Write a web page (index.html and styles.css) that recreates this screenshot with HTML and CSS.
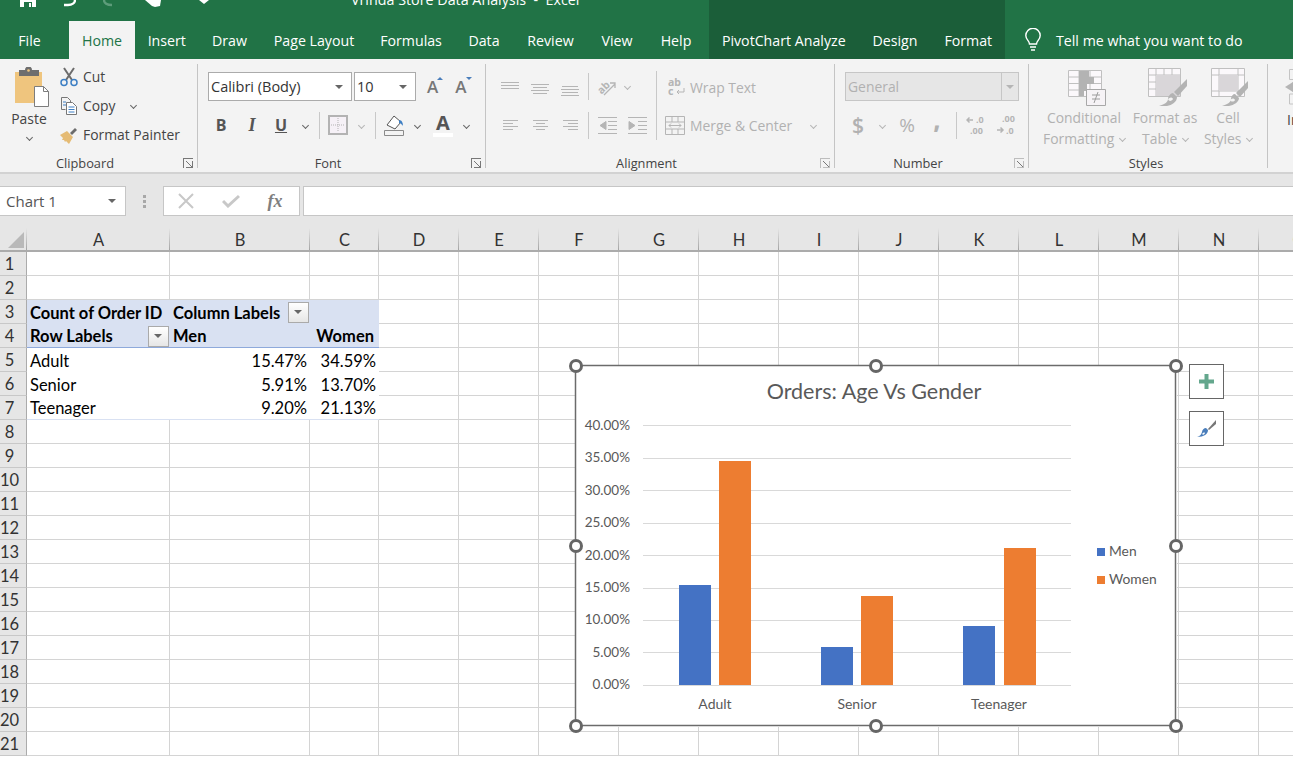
FILE: index.html
```html
<!DOCTYPE html>
<html>

<head>
	<meta charset="utf-8">
	<title>Vrinda Store Data Analysis - Excel</title>
	<link rel="stylesheet" href="styles.css">
</head>

<body>
	<header class="titlebar">
		<div class="title-main">
			<div class="qat">
				<svg class="qat-save" width="16" height="7" viewBox="0 0 16 7"><path d="M0 0h16v7H0z" fill="#fff"/><path d="M4 2h8v5H4z" fill="#217346"/><path d="M9 3h2v4H9z" fill="#fff"/></svg>
				<svg class="qat-undo" width="12" height="7" viewBox="0 0 12 7"><path d="M11 0c0 3-3 5-7 5H0" fill="none" stroke="#fff" stroke-width="2.4"/></svg>
				<svg class="qat-redo" width="12" height="7" viewBox="0 0 12 7"><path d="M1 0c0 3 3 5 8 5" fill="none" stroke="#5d9c7a" stroke-width="2.4"/></svg>
				<svg class="qat-touch" width="16" height="7" viewBox="0 0 16 7"><path d="M0 0l7 6 3 1 5-1 1-6z" fill="#fff"/></svg>
				<svg class="qat-more" width="10" height="4" viewBox="0 0 10 4"><path d="M0 0h10L5 4z" fill="#fff"/></svg>
			</div>
			<span class="doc-title">Vrinda Store Data Analysis &nbsp;-&nbsp; Excel</span>
		</div>
		<div class="title-ctx"><span>PivotChart Tools</span></div>
	</header>

	<nav class="tabs">
		<div class="tabs-main">
			<a class="tab tab-file">File</a>
			<a class="tab tab-home">Home</a>
			<a class="tab">Insert</a>
			<a class="tab">Draw</a>
			<a class="tab">Page Layout</a>
			<a class="tab">Formulas</a>
			<a class="tab">Data</a>
			<a class="tab">Review</a>
			<a class="tab">View</a>
			<a class="tab">Help</a>
		</div>
		<div class="tabs-ctx">
			<a class="tab">PivotChart Analyze</a>
			<a class="tab">Design</a>
			<a class="tab">Format</a>
		</div>
		<div class="tell-me">
			<svg width="18" height="24" viewBox="0 0 18 24" fill="none" stroke="#fff" stroke-width="1.4"><path d="M5.500 16c0-3-3.700-4.500-3.700-8.500a7.200 7.200 0 0 1 14.400 0c0 4-3.700 5.500-3.700 8.500z"/><path d="M6 19h6M7 22h4"/></svg>
			<span>Tell me what you want to do</span>
		</div>
	</nav>

	<section class="ribbon">
		<div class="group group-clipboard">
			<div class="group-body clip-body">
				<div class="paste">
					<svg width="36" height="40" viewBox="0 0 36 40">
						<path d="M1 5h27v31H1z" fill="#efc57e"/>
						<path d="M5 3h6a3.500 3.500 0 0 1 7 0h7v6H5z" fill="#6e6e6e"/>
						<circle cx="14.500" cy="3.500" r="1.300" fill="#efc57e"/>
						<path d="M20.500 19.500h9l5 5v15h-14z" fill="#fff" stroke="#7d7d7d"/>
						<path d="M29.500 19.500v5h5" fill="none" stroke="#7d7d7d"/>
					</svg>
					<span>Paste</span>
					<i class="chev"></i>
				</div>
				<div class="clip-tools">
					<div class="clip-tool">
						<svg width="18" height="20" viewBox="0 0 18 20" fill="none"><path d="M6 13L14 1M12 13L4 1" stroke="#6c6c6c" stroke-width="2"/><circle cx="4" cy="15.500" r="3" stroke="#3d7fc4" stroke-width="1.500"/><circle cx="14" cy="15.500" r="3" stroke="#3d7fc4" stroke-width="1.500"/></svg>
						<span>Cut</span>
					</div>
					<div class="clip-tool">
						<svg width="18" height="18" viewBox="0 0 18 18" fill="none"><path d="M1.500.5h6l3 3v3M1.500.5v12h4" stroke="#777"/><path d="M6.500 5.500h6l4 4v8h-10z" fill="#fff" stroke="#777"/><path d="M3 5h3M3 8h3M8.500 10h6M8.500 12.500h6M8.500 15h6" stroke="#3d7fc4"/></svg>
						<span>Copy</span>
						<i class="chev chev-copy"></i>
					</div>
					<div class="clip-tool">
						<svg width="18" height="18" viewBox="0 0 18 18"><path d="M10 7l5-5 2 2-5 5z" fill="#6c6c6c"/><path d="M0 9l7-4 6 6-4 7-3-3-1 1-1-2-2 0 1-2z" fill="#e5bb74"/></svg>
						<span>Format Painter</span>
					</div>
				</div>
			</div>
			<div class="group-foot"><span class="group-label">Clipboard</span><i class="launcher"></i></div>
		</div>

		<div class="group group-font">
			<div class="group-body">
				<div class="font-top">
					<div class="combo combo-font"><span>Calibri (Body)</span><i class="tri"></i></div>
					<div class="combo combo-size"><span>10</span><i class="tri"></i></div>
					<span class="size-btn size-grow">A<i class="tip-up"></i></span>
					<span class="size-btn size-shrink">A<i class="tip-down"></i></span>
				</div>
				<div class="font-bottom">
					<b class="fmt">B</b>
					<i class="fmt fmt-i">I</i>
					<span class="fmt fmt-u">U</span>
					<i class="chev"></i>
					<i class="sep"></i>
					<svg width="20" height="20" viewBox="0 0 20 20"><path d="M1 1h18v18H1z" fill="#f6f1f7" stroke="#b3b3b3" stroke-width="2"/><path d="M10 3v14M3 10h14" stroke="#b3b3b3" stroke-dasharray="1 1"/></svg>
					<i class="chev chev-off"></i>
					<i class="sep"></i>
					<svg width="21" height="21" viewBox="0 0 21 21"><path d="M10 1l7 6-6 7-8-4z" fill="#fff" stroke="#555"/><path d="M15 5c3 0 4 3 4 6-1-1-2-3-4-3z" fill="#3d7fc4"/><path d="M.5 15.500h19v5H.5z" fill="#f3f3f3" stroke="#8a8a8a"/></svg>
					<i class="chev"></i>
					<span class="font-color">A</span>
					<i class="chev"></i>
				</div>
			</div>
			<div class="group-foot"><span class="group-label">Font</span><i class="launcher"></i></div>
		</div>

		<div class="group group-align">
			<div class="group-body align-body">
				<div class="align-grid">
					<svg width="18" height="10" viewBox="0 0 18 10"><path d="M0 .5h18M0 3.500h18M0 6.500h18" stroke="#b5b5b5"/></svg>
					<svg class="align-mid" width="18" height="10" viewBox="0 0 18 10"><path d="M0 .5h18M2 3.500h14M0 6.500h18M2 9.500h14" stroke="#b5b5b5"/></svg>
					<svg class="align-low" width="18" height="10" viewBox="0 0 18 10"><path d="M1 .5h16M0 3.500h18M1 6.500h16M0 9.500h18" stroke="#b5b5b5"/></svg>
					<i class="sep"></i>
					<svg width="20" height="20" viewBox="0 0 20 20"><text class="svg-ab" x="1" y="15" transform="rotate(-45 6 12)">ab</text><path d="M7 18L18 7M13 6h5v5" fill="none" stroke="#b5b5b5" stroke-width="1.300"/></svg>
					<i class="chev chev-off chev-left"></i>
					<svg width="15" height="11" viewBox="0 0 15 11"><path d="M0 .5h15M0 3.500h10M0 6.500h15M0 9.500h10" stroke="#b5b5b5"/></svg>
					<svg width="15" height="11" viewBox="0 0 15 11"><path d="M0 .5h15M3 3.500h9M0 6.500h15M3 9.500h9" stroke="#b5b5b5"/></svg>
					<svg width="15" height="11" viewBox="0 0 15 11"><path d="M0 .5h15M5 3.500h10M0 6.500h15M5 9.500h10" stroke="#b5b5b5"/></svg>
					<i class="sep"></i>
					<svg width="19" height="17" viewBox="0 0 19 17" fill="none" stroke="#b5b5b5"><path d="M0 .5h19M0 16.500h19M10 4.500h9M10 8.500h9M10 12.500h9"/><path d="M8 4.500L2 8.500l6 4z" fill="#b5b5b5"/></svg>
					<svg width="19" height="17" viewBox="0 0 19 17" fill="none" stroke="#b5b5b5"><path d="M0 .5h19M0 16.500h19M10 4.500h9M10 8.500h9M10 12.500h9"/><path d="M1 4.500l6 4-6 4z" fill="#b5b5b5"/></svg>
				</div>
				<i class="sep sep-long"></i>
				<div class="align-wide">
					<div class="wide-tool wide-wrap">
						<svg width="18" height="20" viewBox="0 0 18 20"><text class="svg-wrap" x="0" y="9">ab</text><text class="svg-wrap" x="0" y="18">c</text><path d="M16 11v4H9M11 13l-2 2 2 2" fill="none" stroke="#b5b5b5"/></svg>
						<span>Wrap Text</span>
					</div>
					<div class="wide-tool wide-merge">
						<svg width="20" height="19" viewBox="0 0 20 19" fill="none" stroke="#b5b5b5"><path d="M.5.500h19v18H.5zM.5 6h19M.5 13h19M7 .5V6M13 .5V6M7 13v5.500M13 13v5.500"/><path d="M4 9.500h12M6 7.500l-2 2 2 2M14 7.500l2 2-2 2"/></svg>
						<span>Merge &amp; Center</span>
						<i class="chev chev-off chev-merge"></i>
					</div>
				</div>
			</div>
			<div class="group-foot"><span class="group-label">Alignment</span><i class="launcher launcher-off"></i></div>
		</div>

		<div class="group group-number">
			<div class="group-body">
				<div class="number-combo"><span>General</span><b><i class="tri tri-off"></i></b></div>
				<div class="number-row">
					<span class="num-sym num-dollar">$</span>
					<i class="chev chev-off"></i>
					<span class="num-sym">%</span>
					<span class="num-sym num-comma">,</span>
					<i class="sep"></i>
					<svg width="20" height="24" viewBox="0 0 20 24"><path d="M7 7H1M3.500 4.500L1 7l2.500 2.500" fill="none" stroke="#b5b5b5" stroke-width="1.500"/><text class="svg-dec" x="10" y="10">.0</text><text class="svg-dec" x="4" y="21">.00</text></svg>
					<svg width="20" height="24" viewBox="0 0 20 24"><text class="svg-dec" x="6" y="9">.00</text><path d="M1 17h6M4.500 14.500L7 17l-2.500 2.500" fill="none" stroke="#b5b5b5" stroke-width="1.500"/><text class="svg-dec" x="10" y="21">.0</text></svg>
				</div>
			</div>
			<div class="group-foot"><span class="group-label">Number</span><i class="launcher launcher-off"></i></div>
		</div>

		<div class="group group-styles">
			<div class="group-body styles-body">
				<div class="style-btn style-cond">
					<svg width="38" height="36" viewBox="0 0 38 36">
						<path d="M.5.500h33v26H.5z" fill="#fbf8fb" stroke="#c0c0c0"/>
						<path d="M11 .5v26M22 .5v26M.5 7h33M.5 13.500h33M.5 20h33" stroke="#c0c0c0"/>
						<path d="M11 1h10v6H11zM11 7h15v7H11zM11 14h8v7h-8zM11 21h5v5h-5z" fill="#b3b3b3"/>
						<path d="M18.500 19.500h19v16h-19z" fill="#f6f3f6" stroke="#a8a8a8"/>
						<path d="M24 25h8M24 29h8M30 22l-4 11" stroke="#9c9c9c"/>
					</svg>
					<span>Conditional</span>
					<span>Formatting <i class="chev chev-off"></i></span>
				</div>
				<div class="style-btn style-table">
					<svg width="40" height="38" viewBox="0 0 40 38">
						<path d="M.5.500h32v28H.5z" fill="#fbf8fb" stroke="#c0c0c0"/>
						<path d="M8 .5v28M16 .5v28M24 .5v28M.5 7h32M.5 14h32M.5 21h32" stroke="#c0c0c0"/>
						<path d="M8 7h24v21H8z" fill="#d9d6d9"/>
						<path d="M39 11v7L30 28l-4-4z" fill="#b3b3b3"/>
						<path d="M25 25l4 4c0 5-5 8-10 9h-8c6-2 9-4 9-7 0-3 3-6 5-6z" fill="#b3b3b3"/>
						<path d="M20 31c2-2 4-2 5 0-1 2-4 3-5 0z" fill="#f3f3f3"/>
					</svg>
					<span>Format as</span>
					<span>Table <i class="chev chev-off"></i></span>
				</div>
				<div class="style-btn style-cell">
					<svg width="38" height="38" viewBox="0 0 38 38">
						<path d="M.5.500h33v28H.5z" fill="#fbf8fb" stroke="#c0c0c0"/>
						<path d="M8 1v28M27 1v28M1 7h32M1 23h32" stroke="#c0c0c0"/>
						<path d="M8 7h19v16H8z" fill="#d9d6d9"/>
						<path d="M37 13v7l-8 9-4-4z" fill="#b3b3b3"/>
						<path d="M24 26l4 4c0 4-5 7-10 8h-7c6-2 9-4 9-7 0-3 2-5 4-5z" fill="#b3b3b3"/>
						<path d="M19 32c2-2 4-2 5 0-1 2-4 2-5 0z" fill="#f3f3f3"/>
					</svg>
					<span>Cell</span>
					<span>Styles <i class="chev chev-off"></i></span>
				</div>
			</div>
			<div class="group-foot"><span class="group-label">Styles</span></div>
		</div>

		<div class="group group-cells">
			<div class="group-body insert-btn">
				<svg width="26" height="36" viewBox="0 0 26 36" fill="none" stroke="#c4c4c4"><path d="M4.500.500h20v10h-20zM4.500 25h20v10h-20zM8 13h16v10H8z"/><path d="M8 13L0 18l8 5z" fill="#b5b5b5" stroke="none"/></svg>
				<span>Insert</span>
			</div>
		</div>
	</section>

	<section class="formula-strip">
		<div class="name-box"><span>Chart 1</span><i class="tri"></i></div>
		<div class="strip-grip"><i></i><i></i><i></i></div>
		<div class="fx-box">
			<svg width="16" height="16" viewBox="0 0 16 16"><path d="M1 1l14 14M15 1L1 15" stroke="#c8c8c8" stroke-width="2"/></svg>
			<svg width="18" height="14" viewBox="0 0 18 14"><path d="M1 7l5 5L17 2" fill="none" stroke="#c8c8c8" stroke-width="3"/></svg>
			<span class="fx">fx</span>
		</div>
		<div class="formula-input"></div>
	</section>

	<main class="sheet">
		<table class="grid">
			<colgroup>
				<col class="col-head"><col class="col-a"><col class="col-b"><col class="col-c">
				<col class="col-std"><col class="col-std"><col class="col-std"><col class="col-std"><col class="col-std"><col class="col-std"><col class="col-std"><col class="col-std"><col class="col-std"><col class="col-std"><col class="col-std"><col class="col-std">
			</colgroup>
			<thead>
				<tr><th class="corner"><i></i></th><th>A</th><th>B</th><th>C</th><th>D</th><th>E</th><th>F</th><th>G</th><th>H</th><th>I</th><th>J</th><th>K</th><th>L</th><th>M</th><th>N</th><th>O</th></tr>
			</thead>
			<tbody>
				<tr><th>1</th><td></td><td></td><td></td><td></td><td></td><td></td><td></td><td></td><td></td><td></td><td></td><td></td><td></td><td></td><td></td></tr>
				<tr><th>2</th><td></td><td></td><td></td><td></td><td></td><td></td><td></td><td></td><td></td><td></td><td></td><td></td><td></td><td></td><td></td></tr>
				<tr>
					<th>3</th>
					<td class="pv">Count of Order ID</td>
					<td class="pv"><div class="with-filter">Column Labels<i class="filter"></i></div></td>
					<td class="pv"></td>
					<td></td><td></td><td></td><td></td><td></td><td></td><td></td><td></td><td></td><td></td><td></td><td></td>
				</tr>
				<tr>
					<th>4</th>
					<td class="pv pv-head"><div class="with-filter">Row Labels<i class="filter"></i></div></td>
					<td class="pv pv-head">Men</td>
					<td class="pv pv-head pv-right">Women</td>
					<td></td><td></td><td></td><td></td><td></td><td></td><td></td><td></td><td></td><td></td><td></td><td></td>
				</tr>
				<tr><th>5</th><td class="row">Adult</td><td class="row num">15.47%</td><td class="row num">34.59%</td><td></td><td></td><td></td><td></td><td></td><td></td><td></td><td></td><td></td><td></td><td></td><td></td></tr>
				<tr><th>6</th><td class="row">Senior</td><td class="row num">5.91%</td><td class="row num">13.70%</td><td></td><td></td><td></td><td></td><td></td><td></td><td></td><td></td><td></td><td></td><td></td><td></td></tr>
				<tr><th>7</th><td class="row row-last">Teenager</td><td class="row row-last num">9.20%</td><td class="row row-last num">21.13%</td><td></td><td></td><td></td><td></td><td></td><td></td><td></td><td></td><td></td><td></td><td></td><td></td></tr>
				<tr><th>8</th><td></td><td></td><td></td><td></td><td></td><td></td><td></td><td></td><td></td><td></td><td></td><td></td><td></td><td></td><td></td></tr>
				<tr><th>9</th><td></td><td></td><td></td><td></td><td></td><td></td><td></td><td></td><td></td><td></td><td></td><td></td><td></td><td></td><td></td></tr>
				<tr><th>10</th><td></td><td></td><td></td><td></td><td></td><td></td><td></td><td></td><td></td><td></td><td></td><td></td><td></td><td></td><td></td></tr>
				<tr><th>11</th><td></td><td></td><td></td><td></td><td></td><td></td><td></td><td></td><td></td><td></td><td></td><td></td><td></td><td></td><td></td></tr>
				<tr><th>12</th><td></td><td></td><td></td><td></td><td></td><td></td><td></td><td></td><td></td><td></td><td></td><td></td><td></td><td></td><td></td></tr>
				<tr><th>13</th><td></td><td></td><td></td><td></td><td></td><td></td><td></td><td></td><td></td><td></td><td></td><td></td><td></td><td></td><td></td></tr>
				<tr><th>14</th><td></td><td></td><td></td><td></td><td></td><td></td><td></td><td></td><td></td><td></td><td></td><td></td><td></td><td></td><td></td></tr>
				<tr><th>15</th><td></td><td></td><td></td><td></td><td></td><td></td><td></td><td></td><td></td><td></td><td></td><td></td><td></td><td></td><td></td></tr>
				<tr><th>16</th><td></td><td></td><td></td><td></td><td></td><td></td><td></td><td></td><td></td><td></td><td></td><td></td><td></td><td></td><td></td></tr>
				<tr><th>17</th><td></td><td></td><td></td><td></td><td></td><td></td><td></td><td></td><td></td><td></td><td></td><td></td><td></td><td></td><td></td></tr>
				<tr><th>18</th><td></td><td></td><td></td><td></td><td></td><td></td><td></td><td></td><td></td><td></td><td></td><td></td><td></td><td></td><td></td></tr>
				<tr><th>19</th><td></td><td></td><td></td><td></td><td></td><td></td><td></td><td></td><td></td><td></td><td></td><td></td><td></td><td></td><td></td></tr>
				<tr><th>20</th><td></td><td></td><td></td><td></td><td></td><td></td><td></td><td></td><td></td><td></td><td></td><td></td><td></td><td></td><td></td></tr>
				<tr><th>21</th><td></td><td></td><td></td><td></td><td></td><td></td><td></td><td></td><td></td><td></td><td></td><td></td><td></td><td></td><td></td></tr>
			</tbody>
		</table>

		<!-- chart floats over the cells, svg uses page coordinates -->
		<svg class="chart" width="602" height="362" viewBox="575 365 602 362">
			<text class="chart-title" x="874" y="399">Orders: Age Vs Gender</text>

			<g class="chart-lines">
				<path d="M643 425.500h428M643 458.500h428M643 490.500h428M643 523.500h428M643 555.500h428M643 588.500h428M643 620.500h428M643 652.500h428M643 685.500h428"/>
			</g>

			<g class="axis-y">
				<text x="630" y="430">40.00%</text>
				<text x="630" y="462">35.00%</text>
				<text x="630" y="495">30.00%</text>
				<text x="630" y="527">25.00%</text>
				<text x="630" y="560">20.00%</text>
				<text x="630" y="592">15.00%</text>
				<text x="630" y="624">10.00%</text>
				<text x="630" y="657">5.00%</text>
				<text x="630" y="689">0.00%</text>
			</g>

			<rect class="bar-men" x="679" y="585" width="32" height="100"/>
			<rect class="bar-women" x="719" y="461" width="32" height="224"/>
			<rect class="bar-men" x="821" y="647" width="32" height="38"/>
			<rect class="bar-women" x="861" y="596" width="32" height="89"/>
			<rect class="bar-men" x="963" y="626" width="32" height="59"/>
			<rect class="bar-women" x="1004" y="548" width="32" height="137"/>

			<g class="axis-x">
				<text x="715" y="709">Adult</text>
				<text x="857" y="709">Senior</text>
				<text x="999" y="709">Teenager</text>
			</g>

			<rect class="bar-men" x="1097" y="548" width="8" height="8"/>
			<text class="legend" x="1109" y="556">Men</text>
			<rect class="bar-women" x="1097" y="576" width="8" height="8"/>
			<text class="legend" x="1109" y="584">Women</text>

			<rect class="chart-frame" x="575.500" y="365.500" width="600" height="360"/>

			<g class="handles">
				<circle cx="576" cy="366" r="5.500"/><circle cx="876" cy="366" r="5.500"/><circle cx="1176" cy="366" r="5.500"/>
				<circle cx="576" cy="546" r="5.500"/><circle cx="1176" cy="546" r="5.500"/>
				<circle cx="576" cy="726" r="5.500"/><circle cx="876" cy="726" r="5.500"/><circle cx="1176" cy="726" r="5.500"/>
			</g>
		</svg>

		<div class="chart-tools">
			<div class="chart-btn">
				<svg width="15" height="15" viewBox="0 0 15 15"><path d="M5.500 0h4v5.500H15v4H9.500V15h-4V9.500H0v-4h5.500z" fill="#64a78d"/></svg>
			</div>
			<div class="chart-btn">
				<svg width="19" height="18" viewBox="0 0 19 18"><path d="M19 0v4l-7 6-1-1z" fill="#777"/><path d="M9 8l2 2c0 4-4 7-11 7 3-1 4-2 5-5 0-2 2-4 4-4z" fill="#4a7ebb"/><path d="M5 14c1-1 2-2 3-1-1 2-2 2-3 1z" fill="#fff"/></svg>
			</div>
		</div>
	</main>
</body>

</html>
```

FILE: styles.css
```css
html,
body {
	margin: 0;
	height: 757px;
	overflow: hidden;
	background: #fff;
	font-family: 'Open Sans', 'Noto Sans', sans-serif;
	color: #444;
}

svg {
	display: block;
	flex: none;
}

i {
	font-style: normal;
}

/* title + tabs */

.titlebar {
	display: flex;
	height: 21px;
	overflow: hidden;
	background: #217346;
	color: #fff;
}

.title-main {
	display: flex;
	width: 709px;
	flex: none;
}

.qat {
	display: flex;
	align-items: flex-start;
	width: 351px;
	flex: none;
}

.qat-save {
	margin-left: 20px;
}

.qat-undo {
	margin-left: 28px;
}

.qat-redo {
	margin-left: 27px;
}

.qat-touch {
	margin-left: 30px;
}

.qat-more {
	margin-left: 38px;
}

.doc-title {
	margin-top: -8px;
	font-size: 14.300px;
	line-height: 16px;
	white-space: nowrap;
}

.title-ctx {
	width: 296px;
	flex: none;
	text-align: center;
	background: #1b5e39;
	color: #b9d3c4;
}

.title-ctx span {
	display: block;
	margin-top: -13px;
	font-size: 12px;
	line-height: 16px;
}

.tabs {
	display: flex;
	height: 38px;
	background: #217346;
	color: #fff;
	font-size: 14.200px;
}

.tabs-main {
	display: grid;
	grid-template-columns: 69px 66px 63.500px 62px 107px 87px 59px 74px 59px 59px;
	width: 709px;
	flex: none;
}

.tabs-ctx {
	display: grid;
	grid-template-columns: 149.500px 73px 73.500px;
	width: 296px;
	flex: none;
	background: #1b5e39;
}

.tab {
	display: flex;
	align-items: center;
	justify-content: center;
	white-space: nowrap;
}

.tab-file {
	padding-right: 10px;
}

.tab-home {
	background: #f3f3f3;
	color: #217346;
}

.tell-me {
	display: flex;
	align-items: center;
	gap: 14px;
	margin-left: 19px;
	white-space: nowrap;
}

/* ribbon */

.ribbon {
	display: flex;
	height: 115px;
	padding-top: 5px;
	box-sizing: border-box;
	overflow: hidden;
	background: #f3f3f3;
	border-bottom: 2px solid #d2d2d2;
	font-size: 13.900px;
}

.group {
	display: flex;
	flex-direction: column;
	flex: none;
	height: 104px;
	box-sizing: border-box;
	border-right: 1px solid #c4c4c4;
}

.group-clipboard {
	width: 198px;
}

.group-font {
	width: 288px;
}

.group-align {
	width: 349px;
}

.group-number {
	width: 194px;
}

.group-styles {
	width: 239px;
}

.group-cells {
	border-right: 0;
	width: 100px;
}

.group-body {
	flex: 1;
	min-height: 0;
}

.group-foot {
	display: flex;
	align-items: center;
	height: 18px;
	padding: 8px 4px 0 0;
	box-sizing: border-box;
	font-size: 12.800px;
	color: #444;
}

.group-label {
	flex: 1;
	text-align: center;
}

.launcher {
	position: relative;
	display: block;
	width: 9px;
	height: 9px;
	margin-left: 13px;
	border: solid #777;
	border-width: 1px 0 0 1px;
}

.launcher::after {
	content: '';
	position: absolute;
	left: 2px;
	top: 2px;
	width: 7px;
	height: 7px;
	box-sizing: border-box;
	border: solid #777;
	border-width: 0 1px 1px 0;
	background: linear-gradient(45deg, #f3f3f3 45%, #777 45%, #777 55%, #f3f3f3 55%);
}

.launcher-off,
.launcher-off::after {
	border-color: #bdbdbd;
}

.chev {
	display: block;
	width: 5px;
	height: 5px;
	box-sizing: border-box;
	border: solid #666;
	border-width: 0 1px 1px 0;
	transform: rotate(45deg);
}

.chev-off {
	border-color: #b5b5b5;
}

.tri {
	display: block;
	width: 0;
	height: 0;
	border: solid transparent;
	border-width: 4px 4px 0;
	border-top-color: #666;
}

.tri-off {
	border-top-color: #b5b5b5;
}

.sep {
	display: block;
	width: 1px;
	height: 27px;
	background: #c8c8c8;
}

/* clipboard */

.clip-body {
	display: flex;
}

.paste {
	display: flex;
	flex-direction: column;
	align-items: center;
	width: 58px;
	flex: none;
	padding-top: 3px;
	box-sizing: border-box;
}

.paste svg {
	margin-left: 6px;
}

.paste span {
	margin-top: 2px;
	line-height: 20px;
}

.paste .chev {
	margin-top: 6px;
}

.clip-tools {
	display: flex;
	flex-direction: column;
	margin: -2px 0 0 2px;
}

.clip-tool {
	display: flex;
	align-items: center;
	gap: 5px;
	height: 29px;
	flex: none;
	white-space: nowrap;
}

.chev-copy {
	margin-left: 10px;
}

/* font */

.font-top {
	display: flex;
	align-items: center;
	margin: 8px 0 0 10px;
	gap: 2px;
}

.combo {
	display: flex;
	align-items: center;
	justify-content: space-between;
	height: 29px;
	padding: 0 8px 0 2px;
	box-sizing: border-box;
	background: #fff;
	border: 1px solid #ababab;
	color: #333;
	font-size: 14.500px;
}

.combo-font {
	width: 144px;
}

.combo-size {
	width: 62px;
}

.size-btn {
	position: relative;
	font-size: 17px;
	font-weight: 600;
	color: #777;
}

.size-grow {
	margin-left: 9px;
}

.size-shrink {
	margin-left: 15px;
}

.tip-up,
.tip-down {
	position: absolute;
	top: 2px;
	right: -5px;
	width: 0;
	height: 0;
	border: solid transparent;
	border-width: 0 3px 3px;
	border-bottom-color: #4a7ebb;
}

.tip-down {
	border-width: 3px 3px 0;
	border-top-color: #4a7ebb;
}

.font-bottom {
	display: grid;
	grid-template-columns: 26px 36px 22px 26px 2px 35px 12px 16px 22px 24px 28px 18px;
	align-items: center;
	justify-items: center;
	height: 30px;
	margin: 9px 0 0 10px;
}

.fmt {
	font-size: 16px;
	font-weight: 700;
	color: #555;
}

.fmt-i {
	font-style: italic;
	font-family: 'Liberation Serif', serif;
	font-size: 18px;
}

.fmt-u {
	text-decoration: underline;
}

.font-color {
	font-size: 20px;
	font-weight: 700;
	line-height: 20px;
	color: #555;
	border-bottom: 4px solid #fff;
	padding: 0 3px;
}

/* alignment */

.align-body {
	display: flex;
	padding-left: 9px;
}

.align-grid {
	display: grid;
	grid-template-columns: 30px 30px 30px 6px 32px 28px;
	grid-template-rows: 29px 30px;
	row-gap: 9px;
	align-items: center;
	justify-items: center;
	margin-top: 8px;
	height: 68px;
	width: 156px;
	flex: none;
}

.align-grid .sep {
	grid-column: 4;
}

.align-mid {
	margin-top: 5px;
}

.align-low {
	margin-top: 9px;
}

.sep-long {
	height: 69px;
	margin: 7px 0 0 5px;
	flex: none;
}

.align-wide {
	display: flex;
	flex-direction: column;
	margin-top: 8px;
	color: #b1b1b1;
}

.wide-tool {
	display: flex;
	align-items: center;
	gap: 5px;
	height: 30px;
	white-space: nowrap;
}

.wide-wrap {
	gap: 4px;
	padding-left: 11px;
}

.wide-merge {
	margin-top: 8px;
	padding-left: 8px;
}

.chev-left {
	margin-right: 20px;
}

.chev-merge {
	margin-left: 14px;
}

.svg-ab,
.svg-wrap {
	font-size: 10.500px;
	font-weight: 700;
	fill: #b5b5b5;
	font-family: 'Noto Sans', sans-serif;
}

.svg-dec {
	font-size: 9px;
	font-weight: 700;
	fill: #b5b5b5;
}

/* number */

.number-combo {
	display: flex;
	align-items: center;
	justify-content: space-between;
	width: 174px;
	height: 29px;
	margin: 8px 0 0 10px;
	box-sizing: border-box;
	padding-left: 2px;
	background: #e6e6e6;
	border: 1px solid #c6c6c6;
	color: #b1b1b1;
}

.number-combo b {
	display: flex;
	align-items: center;
	justify-content: center;
	width: 16px;
	height: 100%;
	border-left: 1px solid #c6c6c6;
}

.number-row {
	display: grid;
	grid-template-columns: 26px 22px 28px 32px 6px 34px 26px;
	align-items: center;
	justify-items: center;
	height: 30px;
	margin: 9px 0 0 10px;
}

.num-sym {
	font-size: 19px;
	color: #b1b1b1;
}

.num-dollar {
	font-size: 21px;
	font-weight: 600;
}

.num-comma {
	font-size: 22px;
	font-weight: 800;
	margin-top: -10px;
}

/* styles */

.styles-body {
	display: grid;
	grid-template-columns: 96px 66px 60px;
	padding-left: 7px;
	color: #b1b1b1;
}

.style-btn {
	display: grid;
	grid-template-rows: 43px 21px 21px;
	justify-items: center;
	align-items: center;
	white-space: nowrap;
}

.style-btn svg {
	align-self: end;
	margin-bottom: 1px;
}

.style-btn .chev {
	display: inline-block;
	margin: 0 0 3px 2px;
}

.style-cond svg {
	margin-left: 6px;
}

.style-table svg {
	margin-left: 5px;
}

.style-cell svg {
	margin-left: 3px;
}

/* insert, cut off by the window */

.insert-btn {
	display: flex;
	flex-direction: column;
	padding: 5px 0 0 17px;
	gap: 5px;
}

.insert-btn span {
	line-height: 20px;
	margin-left: 2px;
}

/* formula bar */

.formula-strip {
	display: flex;
	height: 54px;
	padding-top: 12px;
	box-sizing: border-box;
	background: #e6e6e6;
}

.name-box {
	display: flex;
	align-items: center;
	justify-content: space-between;
	width: 126px;
	height: 30px;
	box-sizing: border-box;
	padding: 0 9px 0 6px;
	background: #fff;
	border: solid #c6c6c6;
	border-width: 1px 1px 1px 0;
	color: #555;
	font-size: 15px;
}

.strip-grip {
	display: flex;
	flex-direction: column;
	justify-content: center;
	gap: 2px;
	width: 37px;
	height: 30px;
	padding-left: 17px;
	box-sizing: border-box;
}

.strip-grip i {
	display: block;
	width: 3px;
	height: 3px;
	background: #a8a8a8;
}

.fx-box {
	display: grid;
	grid-template-columns: 43px 47px 42px;
	align-items: center;
	justify-items: center;
	width: 137px;
	height: 30px;
	box-sizing: border-box;
	background: #fff;
	border: 1px solid #c6c6c6;
}

.fx {
	font-family: 'Liberation Serif', serif;
	font-style: italic;
	font-weight: 700;
	font-size: 18px;
	color: #808080;
}

.formula-input {
	flex: 1;
	height: 30px;
	margin-left: 3px;
	box-sizing: border-box;
	background: #fff;
	border: solid #c6c6c6;
	border-width: 1px 0 1px 1px;
}

/* sheet */

.sheet {
	position: relative;
	height: 529px;
	overflow: hidden;
}

.grid {
	table-layout: fixed;
	width: 1339px;
	border-collapse: separate;
	border-spacing: 0;
	font-family: Lato, 'Open Sans', sans-serif;
	font-size: 16.500px;
	color: #000;
}

.col-head {
	width: 27px;
}

.col-a {
	width: 143px;
}

.col-b {
	width: 140px;
}

.col-c {
	width: 69px;
}

.col-std {
	width: 80px;
}

.grid th {
	height: 24px;
	padding: 0;
	box-sizing: border-box;
	font-weight: 400;
	font-size: 16.500px;
	color: #333;
	background: #e6e6e6;
}

.grid thead th {
	padding-top: 2px;
	border-bottom: 2px solid #ababab;
	background: linear-gradient(#e6e6e6, #a4a4a4) right / 1px 100% no-repeat, #e6e6e6;
}

.grid tbody th {
	padding-right: 7px;
	border-bottom: 1px solid #c8c8c8;
	border-right: 1px solid #ababab;
}

.corner {
	position: relative;
}

.corner i {
	position: absolute;
	left: 8px;
	top: 4px;
	width: 0;
	height: 0;
	border: solid transparent;
	border-width: 0 0 16px 16px;
	border-bottom-color: #b9b9b9;
}

.grid td {
	height: 24px;
	padding: 1px 3px 0;
	box-sizing: border-box;
	white-space: nowrap;
	line-height: 18px;
	border-right: 1px solid #d4d4d4;
	border-bottom: 1px solid #d4d4d4;
}

.grid td.pv {
	background: #d9e1f2;
	font-weight: 700;
	border-right: 0;
	border-bottom: 0;
}

.grid td.pv-head {
	border-bottom: 1px solid #8ea9db;
}

.grid td.pv-right {
	text-align: right;
	padding-right: 5px;
}

.grid td.row {
	border-right: 0;
	border-bottom: 0;
}

.grid td.row-last {
	border-bottom: 1px solid #d9e1f2;
}

.grid td.num {
	text-align: right;
}

.with-filter {
	display: flex;
	align-items: center;
	justify-content: space-between;
}

.filter {
	position: relative;
	display: block;
	width: 21px;
	height: 21px;
	box-sizing: border-box;
	margin-right: -2px;
	background: linear-gradient(#fff, #e6e6e6);
	border: 1px solid #aaa;
}

.filter::after {
	content: '';
	position: absolute;
	left: 5px;
	top: 7px;
	border: solid transparent;
	border-width: 4px 4px 0;
	border-top-color: #666;
}

/* chart */

.chart {
	position: absolute;
	left: 575px;
	top: 137px;
	overflow: visible;
	background: #fff;
	font-family: Lato, 'Open Sans', sans-serif;
}

.chart-title {
	font-size: 21.500px;
	text-anchor: middle;
	fill: #595959;
}

.chart-lines {
	fill: none;
	stroke: #d9d9d9;
}

.axis-y text {
	font-size: 13.500px;
	text-anchor: end;
	fill: #595959;
}

.axis-x text {
	font-size: 14px;
	text-anchor: middle;
	fill: #595959;
}

.legend {
	font-size: 13.800px;
	fill: #595959;
}

.bar-men {
	fill: #4472c4;
}

.bar-women {
	fill: #ed7d31;
}

.chart-frame {
	fill: none;
	stroke: #6b6b6b;
	stroke-width: 1.500;
}

.handles circle {
	fill: #fff;
	stroke: #666;
	stroke-width: 3;
}

.chart-tools {
	position: absolute;
	left: 1189px;
	top: 136px;
	display: flex;
	flex-direction: column;
	gap: 12px;
}

.chart-btn {
	display: flex;
	align-items: center;
	justify-content: center;
	width: 35px;
	height: 35px;
	box-sizing: border-box;
	background: #fff;
	border: 1px solid #666;
}
```
